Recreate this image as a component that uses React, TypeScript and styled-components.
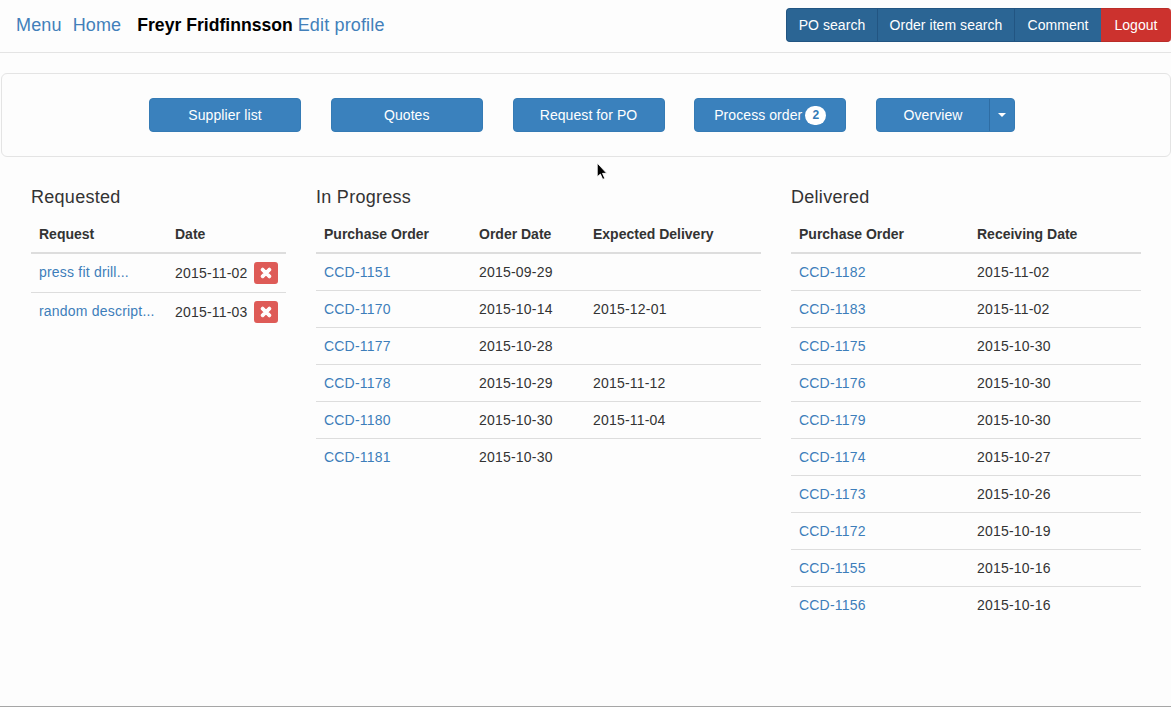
import React from 'react';
import styled, { createGlobalStyle } from 'styled-components';
import { FaTimes } from 'react-icons/fa';

const GlobalStyle = createGlobalStyle`
    * { box-sizing: border-box; }
    html, body { margin: 0; padding: 0; }
    body {
        background: #FDFDFD;
        color: #333333;
        font-family: "Liberation Sans", Arial, sans-serif;
        font-size: 14px;
        line-height: 20px;
    }
`;

const Page = styled.div`
    position: relative;
    height: 707px;
    overflow: hidden;
    border-bottom: 1px solid #A6A6A6;
`;

const NavBar = styled.div`
    display: flex;
    align-items: center;
    justify-content: space-between;
    height: 53px;
    padding: 0 0 3px 16px;
    border-bottom: 1px solid #E4E4E4;
`;
const NavLeft = styled.div`
    display: flex;
    align-items: center;
    font-size: 18px;
`;
const NavLink = styled.a<{ $gap?: number }>`
    color: #4280BA;
    letter-spacing: 0.15px;
    margin-right: ${props => props.$gap ?? 0}px;
    text-decoration: none;
`;
const UserName = styled.span`
    color: #000000;
    font-size: 17.6px;
    font-weight: bold;
    margin-right: 5px;
`;

const ButtonGroup = styled.div`
    display: flex;
    height: 34px;
`;
const GroupButton = styled.div<{ $danger?: boolean; $width: number }>`
    display: flex;
    align-items: center;
    justify-content: center;
    width: ${props => props.$width}px;
    background: ${props => props.$danger ? '#CC322E' : '#2B6594'};
    border: 1px solid ${props => props.$danger ? '#B92C28' : '#225582'};
    border-left-width: ${props => props.$danger ? 0 : 1}px;
    border-right-width: 0;
    color: #FFFFFF;
    letter-spacing: 0.05px;
    &:first-child {
        border-radius: 4px 0 0 4px;
        border-left-width: 1px;
    }
    &:last-child {
        border-radius: 0 4px 4px 0;
    }
`;

const ActionPanel = styled.div`
    display: flex;
    align-items: center;
    gap: 29.75px;
    height: 84px;
    margin: 20px 0 30px 1px;
    padding-left: 147px;
    background: #FDFDFD;
    border: 1px solid #E4E4E4;
    border-radius: 6px;
`;
const ActionButton = styled.div`
    display: flex;
    align-items: center;
    justify-content: center;
    gap: 3px;
    width: 152px;
    height: 34px;
    background: #3A81BD;
    border: 1px solid #357BB5;
    border-radius: 4px;
    color: #FFFFFF;
    letter-spacing: 0.08px;
`;
const Badge = styled.span`
    min-width: 21px;
    height: 19px;
    background: #FFFFFF;
    border-radius: 10px;
    color: #337AB7;
    font-size: 12px;
    font-weight: bold;
    line-height: 19px;
    text-align: center;
`;
const SplitButton = styled.div`
    display: flex;
    width: 139px;
    height: 34px;
    background: #3A81BD;
    border: 1px solid #357BB5;
    border-radius: 4px;
    color: #FFFFFF;
    letter-spacing: 0.08px;
`;
const SplitLabel = styled.div`
    display: flex;
    align-items: center;
    justify-content: center;
    flex: 1;
`;
const SplitCaret = styled.div`
    display: flex;
    align-items: center;
    justify-content: center;
    width: 25px;
    border-left: 1px solid #2E6DA4;
    &::after {
        content: '';
        border-top: 4px solid #FFFFFF;
        border-left: 4px solid transparent;
        border-right: 4px solid transparent;
    }
`;

const Columns = styled.div`
    display: flex;
    gap: 30px;
    padding-left: 31px;
`;
const Column = styled.div<{ $width: number }>`
    width: ${props => props.$width}px;
`;
const Heading = styled.h4`
    margin: 0 0 9px;
    color: #333333;
    font-size: 18px;
    font-weight: 500;
    letter-spacing: 0.28px;
    line-height: 20px;
`;
const Table = styled.table`
    width: 100%;
    table-layout: fixed;
    border-collapse: separate;
    border-spacing: 0;
`;
const HeadCell = styled.th<{ $width?: number }>`
    width: ${props => props.$width ? `${props.$width}px` : 'auto'};
    padding: 8px;
    border-bottom: 2px solid #DDDDDD;
    font-weight: bold;
    text-align: left;
`;
const Row = styled.tr`
    & + & > td {
        border-top: 1px solid #DDDDDD;
    }
`;
const Cell = styled.td`
    padding: 8px;
    color: #333333;
    letter-spacing: 0.2px;
    vertical-align: top;
    white-space: nowrap;
`;
const RowLink = styled.a`
    color: #3D7EBA;
    text-decoration: none;
`;
const DateWithAction = styled.div`
    display: flex;
    align-items: center;
    gap: 6px;
`;
const DeleteButton = styled.div`
    display: flex;
    align-items: center;
    justify-content: center;
    width: 24px;
    height: 22px;
    background: #DE5B57;
    border-radius: 3px;
    color: #FFFFFF;
    font-size: 14px;
    svg {
        stroke: currentColor;
        stroke-width: 40;
    }
`;
const Cursor = styled.svg`
    position: absolute;
    left: 596px;
    top: 162px;
`;

const requested = [
    { text: 'press fit drill...', date: '2015-11-02' },
    { text: 'random descript...', date: '2015-11-03' },
];
const inProgress = [
    ['CCD-1151', '2015-09-29', ''],
    ['CCD-1170', '2015-10-14', '2015-12-01'],
    ['CCD-1177', '2015-10-28', ''],
    ['CCD-1178', '2015-10-29', '2015-11-12'],
    ['CCD-1180', '2015-10-30', '2015-11-04'],
    ['CCD-1181', '2015-10-30', ''],
];
const delivered = [
    ['CCD-1182', '2015-11-02'],
    ['CCD-1183', '2015-11-02'],
    ['CCD-1175', '2015-10-30'],
    ['CCD-1176', '2015-10-30'],
    ['CCD-1179', '2015-10-30'],
    ['CCD-1174', '2015-10-27'],
    ['CCD-1173', '2015-10-26'],
    ['CCD-1172', '2015-10-19'],
    ['CCD-1155', '2015-10-16'],
    ['CCD-1156', '2015-10-16'],
];

const App = () => {
    return (
        <Page>
            <GlobalStyle />
            <NavBar>
                <NavLeft>
                    <NavLink $gap={11}>Menu</NavLink>
                    <NavLink $gap={16}>Home</NavLink>
                    <UserName>Freyr Fridfinnsson</UserName>
                    <NavLink>Edit profile</NavLink>
                </NavLeft>
                <ButtonGroup>
                    <GroupButton $width={91}>PO search</GroupButton>
                    <GroupButton $width={137}>Order item search</GroupButton>
                    <GroupButton $width={87}>Comment</GroupButton>
                    <GroupButton $width={70} $danger>Logout</GroupButton>
                </ButtonGroup>
            </NavBar>

            <ActionPanel>
                <ActionButton>Supplier list</ActionButton>
                <ActionButton>Quotes</ActionButton>
                <ActionButton>Request for PO</ActionButton>
                <ActionButton>Process order <Badge>2</Badge></ActionButton>
                <SplitButton>
                    <SplitLabel>Overview</SplitLabel>
                    <SplitCaret />
                </SplitButton>
            </ActionPanel>

            <Columns>
                <Column $width={255}>
                    <Heading>Requested</Heading>
                    <Table>
                        <thead>
                            <tr>
                                <HeadCell $width={136}>Request</HeadCell>
                                <HeadCell>Date</HeadCell>
                            </tr>
                        </thead>
                        <tbody>
                            {requested.map((r) => (
                                <Row key={r.date}>
                                    <Cell><RowLink>{r.text}</RowLink></Cell>
                                    <Cell>
                                        <DateWithAction>
                                            {r.date}
                                            <DeleteButton><FaTimes /></DeleteButton>
                                        </DateWithAction>
                                    </Cell>
                                </Row>
                            ))}
                        </tbody>
                    </Table>
                </Column>

                <Column $width={445}>
                    <Heading>In Progress</Heading>
                    <Table>
                        <thead>
                            <tr>
                                <HeadCell $width={155}>Purchase Order</HeadCell>
                                <HeadCell $width={114}>Order Date</HeadCell>
                                <HeadCell>Expected Delivery</HeadCell>
                            </tr>
                        </thead>
                        <tbody>
                            {inProgress.map((r) => (
                                <Row key={r[0]}>
                                    <Cell><RowLink>{r[0]}</RowLink></Cell>
                                    <Cell>{r[1]}</Cell>
                                    <Cell>{r[2]}</Cell>
                                </Row>
                            ))}
                        </tbody>
                    </Table>
                </Column>

                <Column $width={350}>
                    <Heading>Delivered</Heading>
                    <Table>
                        <thead>
                            <tr>
                                <HeadCell $width={178}>Purchase Order</HeadCell>
                                <HeadCell>Receiving Date</HeadCell>
                            </tr>
                        </thead>
                        <tbody>
                            {delivered.map((r) => (
                                <Row key={r[0]}>
                                    <Cell><RowLink>{r[0]}</RowLink></Cell>
                                    <Cell>{r[1]}</Cell>
                                </Row>
                            ))}
                        </tbody>
                    </Table>
                </Column>
            </Columns>

            <Cursor width="13" height="20" viewBox="0 0 12 19">
                <path d="M1 1 L1 14 L4 11.5 L6.2 16.5 L8.2 15.6 L6 10.8 L10 10.8 Z" fill="#000000" stroke="#FFFFFF" strokeWidth="0.8" />
            </Cursor>
        </Page>
    );
};
export default App;
